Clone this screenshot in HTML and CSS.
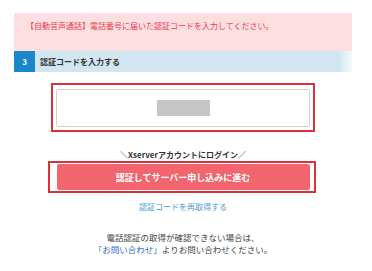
FILE: index.html
```html
<!DOCTYPE html>
<html lang="ja">
<head>
    <meta charset="UTF-8">
    <meta name="viewport" content="width=device-width, initial-scale=1.0">
    <title>電話認証</title>
    <link rel="stylesheet" href="styles.css">
</head>
<body>
<div class="page">
    <div class="notice">【自動音声通話】電話番号に届いた認証コードを入力してください。</div>

    <!-- Step 3 -->
    <div class="step-head">
        <span class="step-num">3</span>
        <span class="step-title">認証コードを入力する</span>
    </div>

    <div class="code-frame">
        <div class="code-input"><span class="code-mask"></span></div>
    </div>

    <p class="login-lead">＼Xserverアカウントにログイン／</p>
    <div class="submit-frame">
        <button class="submit-btn">認証してサーバー申し込みに進む</button>
    </div>

    <a class="resend" href="#">認証コードを再取得する</a>

    <p class="help">電話認証の取得が確認できない場合は、<br><a href="#">「お問い合わせ」</a>よりお問い合わせください。</p>
</div>
</body>
</html>
```

FILE: styles.css
```css
body {
    margin: 0;
    background: #fff;
    font-family: "Noto Sans CJK JP", "Noto Sans", sans-serif;
    color: #444;
}
.page {
    width: 338px;
    margin-left: 14px;
    padding-top: 13px;
    display: flex;
    flex-direction: column;
    align-items: center;
}
.notice {
    align-self: stretch;
    box-sizing: border-box;
    height: 38px;
    padding: 7px 12px;
    background: #fddfe2;
    color: #e9404e;
    font-size: 8px;
    line-height: 12px;
}
.step-head {
    align-self: stretch;
    height: 21px;
    display: flex;
    align-items: center;
    background: linear-gradient(to right, #d2e6f2 96%, #f4f9fc);
}
.step-num {
    width: 21px;
    height: 21px;
    display: flex;
    justify-content: center;
    align-items: center;
    background: #1b87cb;
    color: #fff;
    font-size: 8px;
    font-weight: bold;
}
.step-title {
    margin-left: 5px;
    font-size: 8px;
    font-weight: bold;
    color: #333;
}
.code-frame {
    margin-top: 11px;
    width: 264px;
    box-sizing: border-box;
    border: 2px solid #df2f3b;
    padding: 4px 3px 3px 3px;
}
.code-input {
    height: 38px;
    box-sizing: border-box;
    border: 1px solid #cfcfcf;
    border-radius: 2px;
    display: flex;
    justify-content: center;
    align-items: center;
}
.code-mask {
    width: 53px;
    height: 16px;
    background: #c6c6c6;
}
.login-lead {
    margin: 17px 0 0;
    font-size: 8px;
    line-height: 12px;
    font-weight: bold;
    color: #333;
}
.submit-frame {
    width: 268px;
    box-sizing: border-box;
    border: 2px solid #d9303b;
    padding: 1px 4px 1px 7px;
    margin-left: -3px;
}
.submit-btn {
    display: block;
    width: 100%;
    height: 26px;
    border: none;
    border-radius: 2px;
    background: #f2656f;
    color: #fff;
    font-family: inherit;
    font-size: 9px;
    font-weight: bold;
    padding: 0;
}
.resend {
    margin-top: 8px;
    font-size: 8px;
    line-height: 12px;
    color: #4e9bd6;
    text-decoration: none;
}
.help {
    margin: 18px 0 0;
    font-size: 8.5px;
    line-height: 12px;
    text-align: center;
    color: #444;
}
.help a {
    color: #2d6fc2;
    text-decoration: none;
}
```
